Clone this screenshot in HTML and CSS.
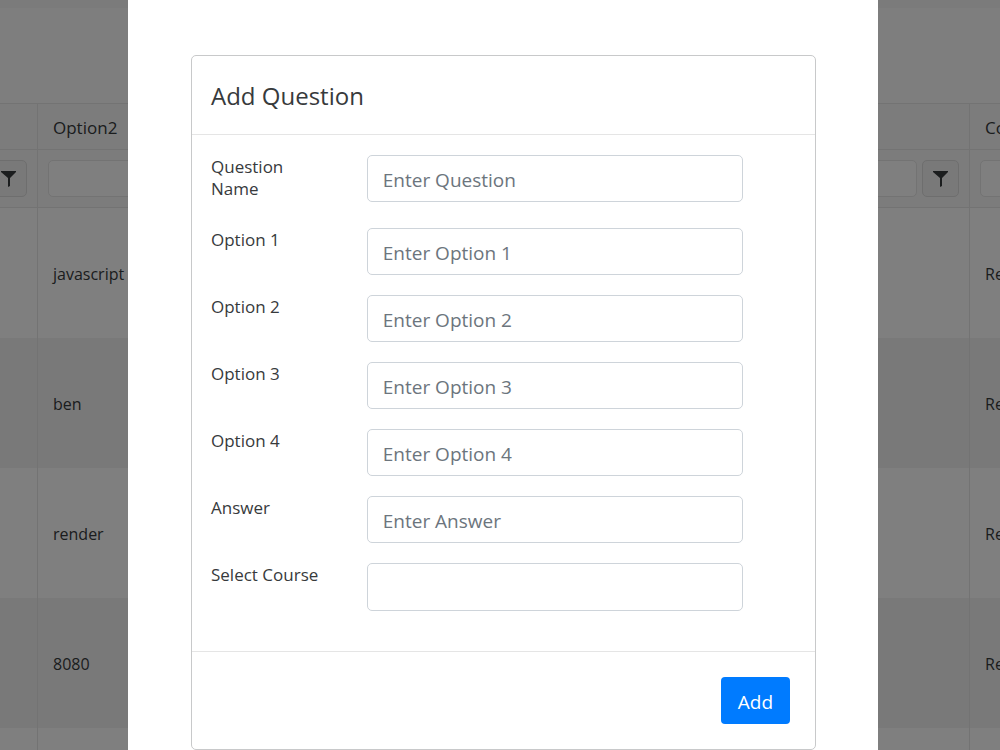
FILE: index.html
```html
<!DOCTYPE html>
<html lang="en">
<head>
    <meta charset="utf-8">
    <title>Questions</title>
    <link rel="stylesheet" href="styles.css">
</head>
<body>
    <!-- Question grid -->
    <div class="grid">
        <div class="grid-toolbar"></div>
        <table class="grid-table">
            <colgroup>
                <col class="col-first">
                <col>
                <col class="col-last">
            </colgroup>
            <thead>
                <tr>
                    <th></th>
                    <th>Option2</th>
                    <th>Course</th>
                </tr>
                <tr class="filter-row">
                    <td>
                        <div class="filter">
                            <button type="button" class="filter-button" aria-label="Filter"><svg width="16" height="16" viewBox="0 0 16 16"><path d="M0 0h15v1L9 7v8l-2 1V7L0 1z"/></svg></button>
                        </div>
                    </td>
                    <td>
                        <div class="filter">
                            <input type="text" class="filter-input" aria-label="Filter Option2">
                            <button type="button" class="filter-button" aria-label="Filter"><svg width="16" height="16" viewBox="0 0 16 16"><path d="M0 0h15v1L9 7v8l-2 1V7L0 1z"/></svg></button>
                        </div>
                    </td>
                    <td>
                        <div class="filter filter-start">
                            <input type="text" class="filter-input" aria-label="Filter Course">
                        </div>
                    </td>
                </tr>
            </thead>
            <tbody>
                <tr><td></td><td>javascript</td><td>React</td></tr>
                <tr><td></td><td>ben</td><td>React</td></tr>
                <tr><td></td><td>render</td><td>React</td></tr>
                <tr><td></td><td>8080</td><td>React</td></tr>
                <tr><td></td><td></td><td></td></tr>
            </tbody>
        </table>
    </div>

    <!-- Add question dialog -->
    <div class="overlay">
        <div class="dialog" role="dialog" aria-labelledby="dialog-title">
            <form class="card">
                <div class="card-header">
                    <h4 id="dialog-title">Add Question</h4>
                </div>
                <div class="card-body">
                    <div class="form-row">
                        <label for="question">Question Name</label>
                        <div class="field"><input type="text" class="form-control" id="question" placeholder="Enter Question"></div>
                    </div>
                    <div class="form-row">
                        <label for="option1">Option 1</label>
                        <div class="field"><input type="text" class="form-control" id="option1" placeholder="Enter Option 1"></div>
                    </div>
                    <div class="form-row">
                        <label for="option2">Option 2</label>
                        <div class="field"><input type="text" class="form-control" id="option2" placeholder="Enter Option 2"></div>
                    </div>
                    <div class="form-row">
                        <label for="option3">Option 3</label>
                        <div class="field"><input type="text" class="form-control" id="option3" placeholder="Enter Option 3"></div>
                    </div>
                    <div class="form-row">
                        <label for="option4">Option 4</label>
                        <div class="field"><input type="text" class="form-control" id="option4" placeholder="Enter Option 4"></div>
                    </div>
                    <div class="form-row">
                        <label for="answer">Answer</label>
                        <div class="field"><input type="text" class="form-control" id="answer" placeholder="Enter Answer"></div>
                    </div>
                    <div class="form-row">
                        <label for="course">Select Course</label>
                        <div class="field">
                            <select class="form-control" id="course">
                                <option value=""></option>
                            </select>
                        </div>
                    </div>
                </div>
                <div class="card-footer">
                    <button type="button" class="btn-primary">Add</button>
                </div>
            </form>
        </div>
    </div>
</body>
</html>
```
FILE: styles.css
```css
* {
    box-sizing: border-box;
}

body {
    margin: 0;
    height: 100vh;
    overflow: hidden;
    background-color: #fff;
    color: #373a3c;
    font-family: "Segoe UI", "Open Sans", sans-serif;
    font-size: 17px;
}

/* Grid */
.grid {
    height: 100vh;
    overflow: hidden;
    border-top: 8px solid #f6f6f6;
}

.grid-toolbar {
    height: 95px;
    background-color: #fdfdfd;
}

.grid-table {
    width: 100%;
    table-layout: fixed;
    border-collapse: separate;
    border-spacing: 0;
    border-top: 1px solid #e6e6e6;
}

.col-first {
    width: 38px;
}

.col-last {
    width: 30px;
}

.grid-table th,
.grid-table td {
    overflow: hidden;
    padding: 1px 15px 0;
    border-right: 1px solid #e6e6e6;
    font-weight: normal;
    text-align: left;
    white-space: nowrap;
}

.grid-table th {
    height: 46px;
    background-color: #f8f8f8;
    border-bottom: 1px solid #e6e6e6;
}

.grid-table .filter-row td {
    height: 58px;
    padding: 0 10px;
    background-color: #f8f8f8;
    border-bottom: 1px solid #e6e6e6;
}

.grid-table tbody td {
    height: 130px;
    font-size: 16px;
}

.grid-table tbody tr:nth-child(even) {
    background-color: #f3f3f3;
}

.grid-table tr > :last-child {
    border-right: none;
}

.filter {
    display: flex;
    justify-content: flex-end;
    gap: 5px;
}

.filter-start {
    justify-content: flex-start;
}

.filter-input {
    flex: 1 0 auto;
    width: 100px;
    height: 37px;
    border: 1px solid #e6e6e6;
    border-radius: 5px;
    background-color: #fff;
}

.filter-button {
    flex: none;
    display: flex;
    align-items: center;
    justify-content: center;
    width: 37px;
    height: 37px;
    padding: 0;
    border: 1px solid #dcdcdc;
    border-radius: 5px;
    background-color: #f2f2f2;
    fill: #373a3c;
}

/* Dialog */
.overlay {
    position: fixed;
    inset: 0;
    display: flex;
    justify-content: center;
    align-items: flex-start;
    padding-left: 6px;
    overflow-y: auto;
    scrollbar-width: none;
    background-color: rgba(0, 0, 0, 0.5);
}

.dialog {
    width: 100%;
    max-width: 750px;
    padding: 55px 62px 0 63px;
    background-color: #fff;
}

.card {
    border: 1px solid #c8c9ca;
    border-radius: 5px;
}

.card-header {
    padding: 20px 19px;
    border-bottom: 1px solid #e5e5e5;
}

.card-header h4 {
    margin: 0;
    padding-top: 2px;
    font-size: 24px;
    font-weight: normal;
    line-height: 36px;
}

.card-body {
    padding: 20px 0;
}

.form-row {
    display: flex;
    margin-bottom: 20px;
}

.form-row label {
    width: 25%;
    padding: 1px 19px 8px;
    line-height: 22px;
}

.field {
    width: 66.6667%;
    padding: 0 20px 0 19px;
}

.form-control {
    display: block;
    width: 100%;
    height: 47px;
    padding: 2px 15px 0;
    border: 1px solid #ced4da;
    border-radius: 5px;
    background-color: #fff;
    font-family: inherit;
    font-size: 19px;
}

select.form-control {
    height: 48px;
    appearance: none;
}

.form-control::placeholder {
    color: #6c757d;
}

.card-footer {
    display: flex;
    justify-content: flex-end;
    padding: 25px;
    border-top: 1px solid #e5e5e5;
}

.btn-primary {
    min-width: 69px;
    height: 47px;
    padding: 2px 15px 0;
    border: none;
    border-radius: 4px;
    background-color: #007bff;
    color: #fff;
    font-family: inherit;
    font-size: 19px;
}
```
